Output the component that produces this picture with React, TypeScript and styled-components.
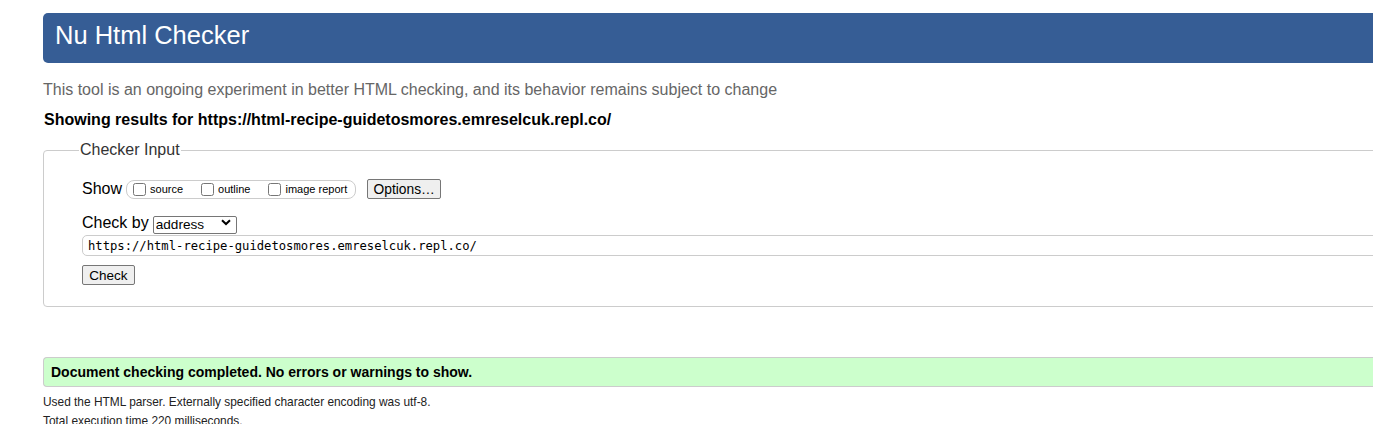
import React from "react";
import styled, { createGlobalStyle } from "styled-components";

const Global = createGlobalStyle`
  html, body { margin: 0; padding: 0; overflow: hidden; background: #fff; }
  body { font-family: "Liberation Sans", Arial, sans-serif; color: #000; }
`;

const Page = styled.div`
  width: 1400px;
  padding: 13px 0 0 43px;
  display: flex;
  flex-direction: column;
`;

const Header = styled.h1`
  margin: 0;
  height: 50px;
  background: #365d95;
  border-radius: 5px;
  color: #fff;
  font-weight: normal;
  font-size: 25.5px;
  display: flex;
  align-items: center;
  padding: 0 0 5px 12px;
  box-sizing: border-box;
`;

const Subtitle = styled.p`
  margin: 17px 0 0;
  line-height: 20px;
  font-size: 16px;
  color: #666;
`;

const Results = styled.p`
  margin: 10px 0 0 1px;
  line-height: 20px;
  font-size: 16px;
  font-weight: bold;
`;

const Fieldset = styled.fieldset`
  margin: 10px 0 0;
  border: 1px solid #ccc;
  border-radius: 4px;
  padding: 0 0 21px 38px;
  display: flex;
  flex-direction: column;
  min-width: 0;
`;

const Legend = styled.legend`
  font-size: 16px;
  line-height: 20px;
  color: #333;
  padding: 0 1px;
  margin-left: -3px;
`;

const Row = styled.div<{ $mt: number }>`
  display: flex;
  align-items: center;
  margin-top: ${(p) => p.$mt}px;
  font-size: 16px;
  line-height: 20px;
`;

const Label = styled.span`
  margin-right: 4px;
`;

const OptionGroup = styled.div`
  display: flex;
  align-items: center;
  height: 19px;
  box-sizing: border-box;
  border: 1px solid #ccc;
  border-radius: 8px;
  padding: 0 8px 0 6px;
  gap: 18px;
  margin-right: 11px;
`;

const CheckLabel = styled.label`
  display: block;
  font-size: 11px;
  line-height: 13px;
  color: #000;
  white-space: nowrap;
`;

const Box = styled.input`
  width: 13px;
  height: 13px;
  margin: 0 4px 0 0;
  vertical-align: -3px;
`;

const Button = styled.button<{ $w: number; $fs: number }>`
  width: ${(p) => p.$w}px;
  height: 20px;
  font-family: "Liberation Sans", Arial, sans-serif;
  font-size: ${(p) => p.$fs}px;
  background: #efefef;
  border: 1px solid #767676;
  border-radius: 2px;
  padding: 0;
  color: #000;
`;

const SelectWrap = styled.div`
  position: relative;
  width: 84px;
  height: 18px;
`;

const Select = styled.select`
  appearance: none;
  width: 100%;
  height: 100%;
  box-sizing: border-box;
  border: 1px solid #767676;
  border-radius: 2px;
  background: #fff;
  font-family: "Liberation Sans", Arial, sans-serif;
  font-size: 13.6px;
  padding: 0 0 0 2px;
  color: #000;
`;

const Chevron = styled.svg`
  position: absolute;
  right: 6px;
  top: 5px;
  pointer-events: none;
`;

const UrlInput = styled.input`
  margin-top: 2px;
  height: 21px;
  box-sizing: border-box;
  border: 1px solid #ccc;
  border-radius: 5px;
  font-family: "DejaVu Sans Mono", "Liberation Mono", monospace;
  font-size: 12.2px;
  padding: 0 5px;
  color: #000;
  width: 100%;
`;

const CheckRow = styled.div`
  margin-top: 9px;
  display: flex;
`;

const Success = styled.div`
  margin-top: 50px;
  height: 30px;
  box-sizing: border-box;
  background: #ccffcc;
  border: 1px solid #ccc;
  border-right: none;
  border-radius: 4px 0 0 4px;
  display: flex;
  align-items: center;
  padding-left: 7px;
  font-size: 14px;
  font-weight: bold;
  color: #000;
`;

const Note = styled.p<{ $mt: number }>`
  margin: ${(p) => p.$mt}px 0 0;
  font-size: 11.9px;
  line-height: 14px;
  color: #222;
`;

export default function App() {
  return (
    <>
      <Global />
      <Page>
        <Header>Nu Html Checker</Header>
        <Subtitle>
          This tool is an ongoing experiment in better HTML checking, and its behavior remains subject to change
        </Subtitle>
        <Results>Showing results for https://html-recipe-guidetosmores.emreselcuk.repl.co/</Results>
        <Fieldset>
          <Legend>Checker Input</Legend>
          <Row $mt={19}>
            <Label>Show</Label>
            <OptionGroup>
              <CheckLabel>
                <Box type="checkbox" />
                source
              </CheckLabel>
              <CheckLabel>
                <Box type="checkbox" />
                outline
              </CheckLabel>
              <CheckLabel>
                <Box type="checkbox" />
                image report
              </CheckLabel>
            </OptionGroup>
            <Button $w={74} $fs={13.8}>Options…</Button>
          </Row>
          <Row $mt={14}>
            <Label>Check by</Label>
            <SelectWrap>
              <Select defaultValue="address">
                <option value="address">address</option>
                <option value="upload">file upload</option>
                <option value="text">text input</option>
              </Select>
              <Chevron width="10" height="7" viewBox="0 0 10 7">
                <path d="M1 1.2 L5 5 L9 1.2" fill="none" stroke="#000" strokeWidth="2" />
              </Chevron>
            </SelectWrap>
          </Row>
          <UrlInput type="url" defaultValue="https://html-recipe-guidetosmores.emreselcuk.repl.co/" />
          <CheckRow>
            <Button $w={53} $fs={13.5}>Check</Button>
          </CheckRow>
        </Fieldset>
        <Success>Document checking completed. No errors or warnings to show.</Success>
        <Note $mt={8}>Used the HTML parser. Externally specified character encoding was utf-8.</Note>
        <Note $mt={5}>Total execution time 220 milliseconds.</Note>
      </Page>
    </>
  );
}
